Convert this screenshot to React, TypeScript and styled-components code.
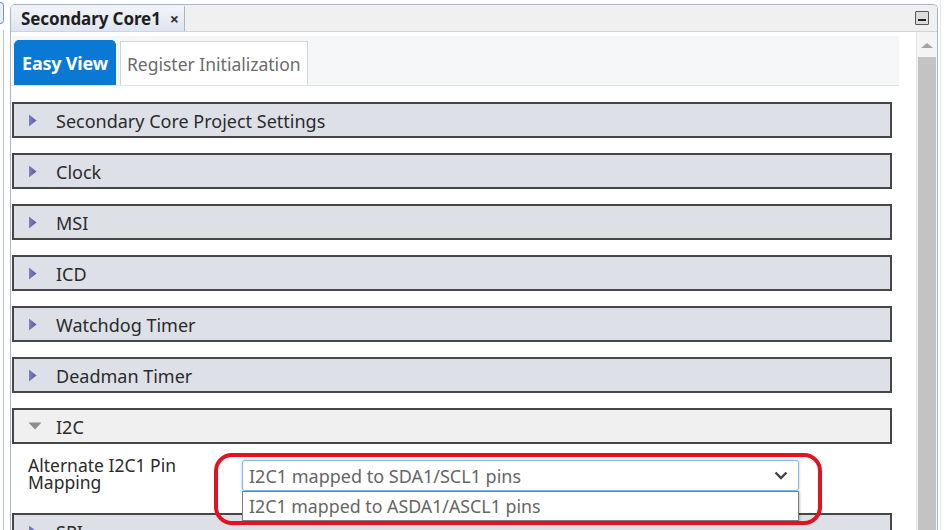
import React from 'react'
import styled, { createGlobalStyle } from 'styled-components'

const GlobalStyle = createGlobalStyle`
  html, body {
    margin: 0;
    padding: 0;
    background: #ffffff;
    font-family: "Noto Sans", "Open Sans", "DejaVu Sans", sans-serif;
    overflow: hidden;
  }
`

const Screen = styled.div`
  display: flex;
  flex-direction: row;
  width: 944px;
  height: 530px;
  overflow: hidden;
  background: #ffffff;
`

const SideStrip = styled.div`
  width: 10px;
  display: flex;
  flex-direction: column;
  flex-shrink: 0;
`

const SideKnob = styled.div`
  width: 3px;
  height: 20px;
  margin-top: 2px;
  border: 1px solid #6f9ad6;
  border-left: none;
  border-radius: 0 4px 4px 0;
  background: #e9eef6;
`

const SideLine = styled.div`
  flex: 1;
  width: 1px;
  margin-top: 6px;
  margin-left: 3px;
  background: #b8c4d4;
`

const Panel = styled.div`
  margin-top: 4px;
  width: 926px;
  display: flex;
  flex-direction: column;
  border: 1px solid #a7b6cb;
  border-bottom: none;
  border-radius: 5px 5px 0 0;
  overflow: hidden;
`

const TabBar = styled.div`
  height: 26px;
  flex-shrink: 0;
  display: flex;
  align-items: stretch;
  background: #f0f0f0;
  border-bottom: 1px solid #c9d5e5;
`

const DocTab = styled.div`
  width: 174px;
  display: flex;
  align-items: center;
  padding-left: 10px;
  box-sizing: border-box;
  gap: 9px;
  margin-top: 1px;
  background: linear-gradient(#f2f4f9, #dfe5ee);
  border-right: 1px solid #a7b6cb;
  font-weight: 700;
  font-size: 17px;
  letter-spacing: -0.1px;
  color: #1e1e1e;
`

const CloseMark = styled.span`
  font-size: 16px;
  font-weight: 700;
  color: #333;
`

const BarFill = styled.div`
  flex: 1;
`

const MinButton = styled.div`
  width: 14px;
  height: 14px;
  margin: 6px 8px 0 0;
  border: 1px solid #555;
  border-radius: 1px;
  background: #dcdcdc;
  display: flex;
  align-items: flex-end;
  justify-content: center;
  padding-bottom: 3px;
  box-sizing: border-box;
  &::after {
    content: '';
    width: 8px;
    height: 2px;
    background: #222;
  }
`

const Body = styled.div`
  flex: 1;
  display: flex;
  flex-direction: row;
  min-height: 0;
`

const Content = styled.div`
  position: relative;
  flex: 1;
  padding: 4px 0 0 1px;
  display: flex;
  flex-direction: column;
  min-width: 0;
  overflow: hidden;
`

const ViewTabs = styled.div`
  width: 887px;
  height: 50px;
  flex-shrink: 0;
  box-sizing: border-box;
  display: flex;
  align-items: flex-end;
  gap: 4px;
  padding-left: 2px;
  background: #f6f7f9;
  border-bottom: 1px solid #e1e5eb;
`

const ViewTab = styled.div<{ $active?: boolean }>`
  height: ${p => (p.$active ? '45px' : '44px')};
  box-sizing: border-box;
  display: flex;
  align-items: center;
  padding: 0 ${p => (p.$active ? '7px' : '6px')};
  font-size: ${p => (p.$active ? '18px' : '17.5px')};
  font-weight: ${p => (p.$active ? 700 : 400)};
  letter-spacing: ${p => (p.$active ? '-0.2px' : '0')};
  color: ${p => (p.$active ? '#ffffff' : '#6b6b6b')};
  background: ${p => (p.$active ? '#0a79d6' : '#ffffff')};
  border: 1px solid ${p => (p.$active ? '#0a79d6' : '#d3d3d3')};
  border-bottom: none;
  border-radius: ${p => (p.$active ? '5px 5px 0 0' : '0')};
`

const Sections = styled.div`
  margin-top: 16px;
  flex-shrink: 0;
  display: flex;
  flex-direction: column;
`

const SectionBar = styled.div<{ $open?: boolean }>`
  width: 880px;
  height: 36px;
  box-sizing: border-box;
  flex-shrink: 0;
  display: flex;
  align-items: center;
  padding-left: 14px;
  margin-bottom: ${p => (p.$open ? '0' : '15px')};
  background: ${p => (p.$open ? '#f0f0f0' : '#dde1e7')};
  border: 2px solid #464646;
  font-size: 18px;
  color: #2b2b2b;
`

const Caret = styled.span`
  width: 26px;
  display: flex;
  align-items: center;
  margin-right: 2px;
`

const SectionTitle = styled.span`
  margin-top: 1px;
`

const OpenBody = styled.div`
  height: 69px;
  flex-shrink: 0;
  display: flex;
  flex-direction: row;
  align-items: flex-start;
  padding: 10px 0 0 16px;
  box-sizing: border-box;
`

const FieldLabel = styled.div`
  width: 214px;
  margin-top: 3px;
  padding-right: 34px;
  box-sizing: border-box;
  font-size: 17.5px;
  line-height: 17px;
  color: #2b2b2b;
`

const SelectBox = styled.div`
  position: relative;
  width: 557px;
  height: 31px;
  box-sizing: border-box;
  margin-top: 6px;
  display: flex;
  align-items: center;
  justify-content: space-between;
  padding: 0 10px 0 6px;
  border: 1px solid #86b8ea;
  border-radius: 3px;
  box-shadow: 0 0 3px rgba(90, 160, 230, 0.55);
  background: #ffffff;
  font-size: 18px;
  color: #666666;
`

const OptionList = styled.div`
  position: absolute;
  left: -1px;
  top: 30px;
  width: 557px;
  height: 30px;
  box-sizing: border-box;
  display: flex;
  align-items: center;
  padding-left: 6px;
  border: 1px solid #7c7c7c;
  background: #ffffff;
  box-shadow: 1px 1px 2px rgba(0, 0, 0, 0.25);
  font-size: 17.8px;
  color: #666666;
  z-index: 2;
`

const Highlight = styled.div`
  position: absolute;
  left: 203px;
  top: 421px;
  width: 608px;
  height: 72px;
  box-sizing: border-box;
  border: 4px solid #e3121f;
  border-radius: 18px;
  pointer-events: none;
  z-index: 3;
`

const ScrollTrack = styled.div`
  width: 20px;
  flex-shrink: 0;
  display: flex;
  flex-direction: column;
  align-items: center;
  background: #f4f4f4;
  border-left: 1px solid #e6e6e6;
`

const ScrollArrow = styled.div`
  margin-top: 11px;
  width: 0;
  height: 0;
  border-left: 6px solid transparent;
  border-right: 6px solid transparent;
  border-bottom: 5px solid #a3a3a3;
`

const ScrollThumb = styled.div`
  margin-top: 9px;
  width: 18px;
  flex: 1;
  background: #c3c3c3;
`

const RightEdge = styled.div`
  flex: 1;
  border-left: 1px solid #dfe6ef;
  margin-left: 2px;
`

const RightArrow = () => (
  <svg width="9" height="13" viewBox="0 0 9 13">
    <defs>
      <linearGradient id="caretFill" x1="0" y1="0" x2="1" y2="0">
        <stop offset="0" stopColor="#7f82b6" />
        <stop offset="1" stopColor="#5458ad" />
      </linearGradient>
    </defs>
    <path d="M1 0.5 L8.5 6.5 L1 12.5 Z" fill="url(#caretFill)" />
  </svg>
)

const DownArrow = () => (
  <svg width="14" height="8" viewBox="0 0 14 8">
    <path d="M0.5 0.5 L13.5 0.5 L7 7.5 Z" fill="#8c8c8c" />
  </svg>
)

const Chevron = () => (
  <svg width="14" height="9" viewBox="0 0 14 9">
    <path d="M1.5 1.5 L7 7 L12.5 1.5" fill="none" stroke="#444" strokeWidth="2.4" />
  </svg>
)

const closedSections = [
  'Secondary Core Project Settings',
  'Clock',
  'MSI',
  'ICD',
  'Watchdog Timer',
  'Deadman Timer',
]

export default function App() {
  return (
    <Screen>
      <GlobalStyle />
      <SideStrip>
        <SideKnob />
        <SideLine />
      </SideStrip>
      <Panel>
        <TabBar>
          <DocTab>
            Secondary Core1
            <CloseMark>×</CloseMark>
          </DocTab>
          <BarFill />
          <MinButton />
        </TabBar>
        <Body>
          <Content>
            <ViewTabs>
              <ViewTab $active>Easy View</ViewTab>
              <ViewTab>Register Initialization</ViewTab>
            </ViewTabs>
            <Sections>
              {closedSections.map(title => (
                <SectionBar key={title}>
                  <Caret><RightArrow /></Caret>
                  <SectionTitle>{title}</SectionTitle>
                </SectionBar>
              ))}
              <SectionBar $open>
                <Caret><DownArrow /></Caret>
                <SectionTitle>I2C</SectionTitle>
              </SectionBar>
              <OpenBody>
                <FieldLabel>Alternate I2C1 Pin Mapping</FieldLabel>
                <SelectBox>
                  I2C1 mapped to SDA1/SCL1 pins
                  <Chevron />
                  <OptionList>I2C1 mapped to ASDA1/ASCL1 pins</OptionList>
                </SelectBox>
              </OpenBody>
              <SectionBar>
                <Caret><RightArrow /></Caret>
                <SectionTitle>SPI</SectionTitle>
              </SectionBar>
            </Sections>
            <Highlight />
          </Content>
          <ScrollTrack>
            <ScrollArrow />
            <ScrollThumb />
          </ScrollTrack>
        </Body>
      </Panel>
      <RightEdge />
    </Screen>
  )
}
